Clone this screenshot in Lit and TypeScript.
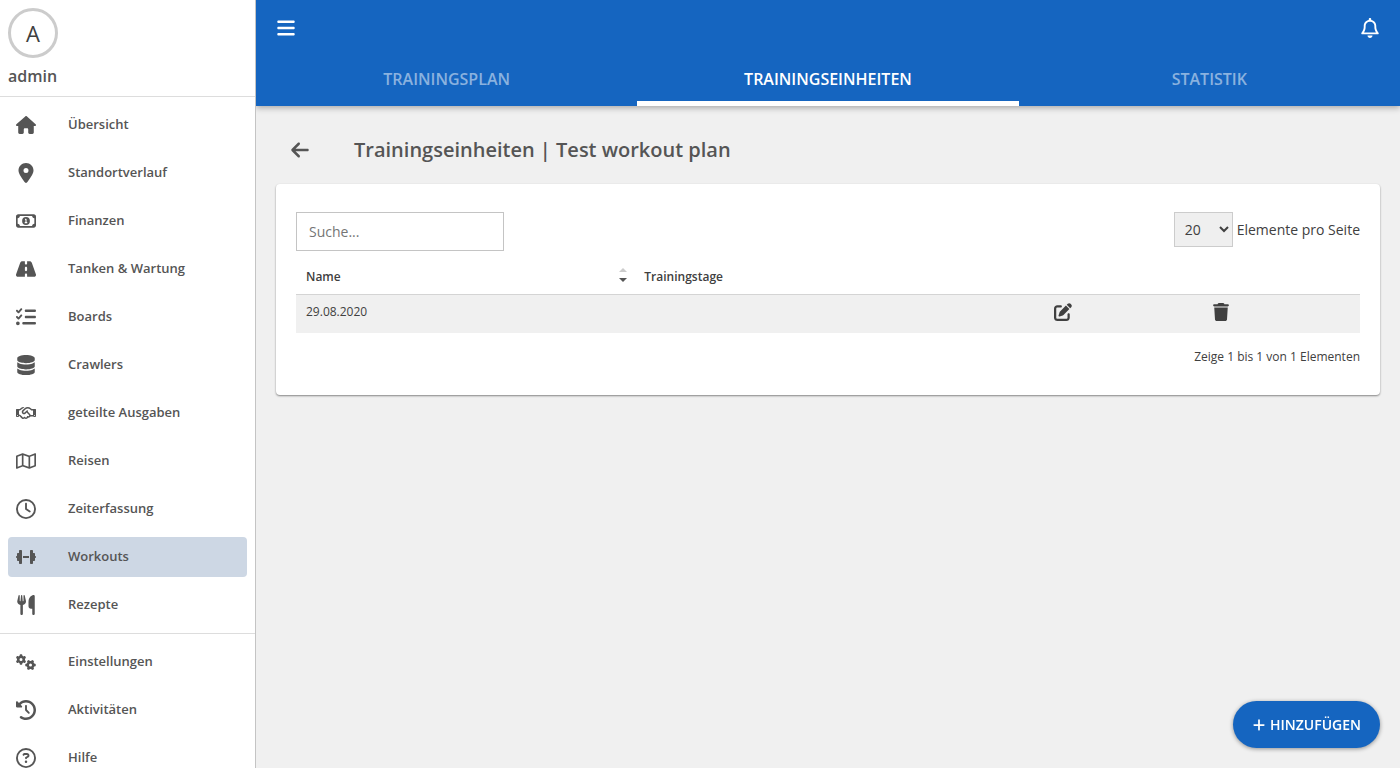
import { LitElement, html, css, svg } from "lit";
import { customElement, property, state } from "lit/decorators.js";
import { classMap } from "lit/directives/class-map.js";

const GEAR =
  "M308.5 135.3c7.1-6.3 9.9-16.2 6.2-25c-2.3-5.3-4.8-10.5-7.6-15.5L304 89.4c-3-5-6.3-9.9-9.8-14.6c-5.7-7.6-15.7-10.1-24.7-7.1l-28.2 9.3c-10.7-8.8-23-16-36.2-20.9L199 27.1c-1.9-9.3-9.1-16.7-18.5-17.8C173.9 8.4 167.2 8 160.4 8h-.7c-6.8 0-13.5 .4-20.1 1.2c-9.4 1.1-16.6 8.6-18.5 17.8L115 56.1c-13.3 5-25.5 12.1-36.2 20.9L50.5 67.8c-9-3-19-.5-24.7 7.1c-3.5 4.7-6.8 9.6-9.9 14.6l-3 5.3c-2.8 5-5.3 10.2-7.6 15.6c-3.7 8.7-.9 18.6 6.2 25l22.2 19.8C32.6 161.9 32 168.9 32 176s.6 14.1 1.7 20.9L11.5 216.7c-7.1 6.3-9.9 16.2-6.2 25c2.3 5.3 4.8 10.5 7.6 15.6l3 5.2c3 5.1 6.3 9.9 9.9 14.6c5.7 7.6 15.7 10.1 24.7 7.1l28.2-9.3c10.7 8.8 23 16 36.2 20.9l6.1 29.1c1.9 9.3 9.1 16.7 18.5 17.8c6.7 .8 13.5 1.2 20.4 1.2s13.7-.4 20.4-1.2c9.4-1.1 16.6-8.6 18.5-17.8l6.1-29.1c13.3-5 25.5-12.1 36.2-20.9l28.2 9.3c9 3 19 .5 24.7-7.1c3.5-4.7 6.8-9.5 9.8-14.6l3.1-5.4c2.8-5 5.3-10.2 7.6-15.5c3.7-8.7 .9-18.6-6.2-25l-22.2-19.8c1.1-6.8 1.7-13.8 1.7-20.9s-.6-14.1-1.7-20.9l22.2-19.8zM112 176a48 48 0 1 1 96 0 48 48 0 1 1 -96 0z";

/* name -> [viewBox width, path]; every icon is 512 units high */
const ICONS: Record<string, [number, string]> = {
  house: [576, "M575.8 255.5c0 18-15 32.1-32 32.1h-32l.7 160.2c0 2.7-.2 5.4-.5 8.1V472c0 22.1-17.9 40-40 40H456c-1.1 0-2.2 0-3.3-.1c-1.4 .1-2.8 .1-4.2 .1H416 392c-22.1 0-40-17.9-40-40V448 384c0-17.7-14.3-32-32-32H256c-17.7 0-32 14.3-32 32v64 24c0 22.1-17.9 40-40 40H160 128.1c-1.5 0-3-.1-4.5-.2c-1.2 .1-2.4 .2-3.6 .2H104c-22.1 0-40-17.9-40-40V360c0-.9 0-1.9 .1-2.8V287.6H32c-18 0-32-14-32-32.1c0-9 3-17 10-24L266.4 8c7-7 15-8 22-8s15 2 21 7L564.8 231.5c8 7 12 15 11 24z"],
  pin: [384, "M215.7 499.2C267 435 384 279.4 384 192C384 86 298 0 192 0S0 86 0 192c0 87.4 117 243 168.3 307.2c12.3 15.3 35.1 15.3 47.4 0zM192 128a64 64 0 1 1 0 128 64 64 0 1 1 0-128z"],
  money: [576, "M112 112c0 35.3-28.7 64-64 64V336c35.3 0 64 28.7 64 64H464c0-35.3 28.7-64 64-64V176c-35.3 0-64-28.7-64-64H112zM0 128C0 92.7 28.7 64 64 64H512c35.3 0 64 28.7 64 64V384c0 35.3-28.7 64-64 64H64c-35.3 0-64-28.7-64-64V128zM176 256a112 112 0 1 1 224 0 112 112 0 1 1 -224 0zm80-48c0 8.8 7.2 16 16 16v64h-8c-8.8 0-16 7.2-16 16s7.2 16 16 16h24 24c8.8 0 16-7.2 16-16s-7.2-16-16-16h-8V208c0-8.8-7.2-16-16-16H272c-8.8 0-16 7.2-16 16z"],
  road: [576, "M256 32H181.2c-27.1 0-51.3 17.1-60.3 42.6L3.1 407.2C1.1 413 0 419.2 0 425.4C0 455.5 24.5 480 54.6 480H256V416c0-17.7 14.3-32 32-32s32 14.3 32 32v64H521.4c30.2 0 54.6-24.5 54.6-54.6c0-6.2-1.1-12.4-3.1-18.2L455.1 74.6C446 49.1 421.9 32 394.8 32H320V96c0 17.7-14.3 32-32 32s-32-14.3-32-32V32zm64 192v64c0 17.7-14.3 32-32 32s-32-14.3-32-32V224c0-17.7 14.3-32 32-32s32 14.3 32 32z"],
  checklist: [512, "M152.1 38.2c9.9 8.9 10.7 24 1.8 33.9l-72 80c-4.4 4.9-10.6 7.8-17.2 7.9s-12.9-2.4-17.6-7L7 113C-2.3 103.6-2.3 88.4 7 79s24.6-9.4 33.9 0l22.1 22.1 55.1-61.2c8.9-9.9 24-10.7 33.9-1.8zm0 160c9.9 8.9 10.7 24 1.8 33.9l-72 80c-4.4 4.9-10.6 7.8-17.2 7.9s-12.9-2.4-17.6-7L7 273c-9.4-9.4-9.4-24.6 0-33.9s24.6-9.4 33.9 0l22.1 22.1 55.1-61.2c8.9-9.9 24-10.7 33.9-1.8zM224 96c0-17.7 14.3-32 32-32H480c17.7 0 32 14.3 32 32s-14.3 32-32 32H256c-17.7 0-32-14.3-32-32zm0 160c0-17.7 14.3-32 32-32H480c17.7 0 32 14.3 32 32s-14.3 32-32 32H256c-17.7 0-32-14.3-32-32zM160 416c0-17.7 14.3-32 32-32H480c17.7 0 32 14.3 32 32s-14.3 32-32 32H192c-17.7 0-32-14.3-32-32zM48 368a48 48 0 1 1 0 96 48 48 0 1 1 0-96z"],
  database: [448, "M448 80v48c0 44.2-100.3 80-224 80S0 172.2 0 128V80C0 35.8 100.3 0 224 0S448 35.8 448 80zM393.2 214.7c20.8-7.4 39.9-16.9 54.8-28.6V288c0 44.2-100.3 80-224 80S0 332.2 0 288V186.1c14.9 11.8 34 21.2 54.8 28.6C99.7 230.7 159.5 240 224 240s124.3-9.3 169.2-25.3zM0 346.1c14.9 11.8 34 21.2 54.8 28.6C99.7 390.7 159.5 400 224 400s124.3-9.3 169.2-25.3c20.8-7.4 39.9-16.9 54.8-28.6V432c0 44.2-100.3 80-224 80S0 476.2 0 432V346.1z"],
  handshake: [640, "M272.2 64.6l-51.1 51.1c-15.3 4.2-29.5 11.9-41.5 22.5L153 161.9C142.8 171 129.5 176 115.8 176H96V304c20.4 .6 39.8 8.9 54.3 23.4l35.6 35.6 7 7 0 0L219.9 397c6.2 6.2 16.4 6.2 22.6 0c1.7-1.7 3-3.7 3.7-5.8c2.8-7.7 9.3-13.5 17.3-15.3s16.4 .6 22.2 6.5L296.5 393c11.6 11.6 30.4 11.6 41.9 0c5.4-5.4 8.3-12.3 8.6-19.4c.4-8.8 5.6-16.6 13.6-20.4s17.3-3 24.4 2.1c9.4 6.7 22.5 5.8 30.9-2.6c9.4-9.4 9.4-24.6 0-33.9L340.1 243l-35.8 33c-27.3 25.2-69.2 25.6-97 .9c-31.7-28.2-32.4-77.4-1.6-106.5l70.1-66.2C303.2 78.4 339.4 64 377.1 64c36.1 0 71 13.3 97.9 37.2L505.1 128H544h40 40c8.8 0 16 7.2 16 16V352c0 17.7-14.3 32-32 32H576c-11.8 0-22.2-6.4-27.7-16H463.4c-3.4 6.7-7.9 13.1-13.5 18.7c-17.1 17.1-40.8 23.8-63 20.1c-3.6 7.3-8.5 14.1-14.6 20.2c-27.3 27.3-70 30-100.4 8.1c-25.1 20.8-62.5 19.5-86-4.1L159 404l-7-7-35.6-35.6c-5.5-5.5-12.7-8.7-20.4-9.3C96 369.7 81.6 384 64 384H32c-17.7 0-32-14.3-32-32V144c0-8.8 7.2-16 16-16H56 96h19.8c2 0 3.9-.7 5.3-2l26.5-23.6C175.5 77.7 211.4 64 248.7 64H259c4.4 0 8.9 .2 13.2 .6zM544 320V176H496c-5.9 0-11.6-2.2-15.9-6.1l-36.9-32.8c-18.2-16.2-41.7-25.1-66.1-25.1c-25.4 0-49.8 9.7-68.3 27.1l-70.1 66.2c-10.3 9.8-10.1 26.3 .5 35.7c9.3 8.3 23.4 8.1 32.5-.3l71.9-66.4c9.7-9 24.9-8.4 33.9 1.4s8.4 24.9-1.4 33.9l-.8 .8 74.4 74.4c10 10 16.5 22.3 19.4 35.1H544zM64 336a16 16 0 1 0 -32 0 16 16 0 1 0 32 0zm528 16a16 16 0 1 0 0-32 16 16 0 1 0 0 32z"],
  map: [576, "M565.6 36.2C572.1 40.7 576 48.1 576 56V392c0 10-6.2 18.9-15.5 22.4l-168 64c-5.2 2-10.9 2.1-16.1 .3L192.5 417.5l-160 61c-7.4 2.8-15.7 1.8-22.2-2.7S0 463.9 0 456V120c0-10 6.1-18.9 15.5-22.4l168-64c5.2-2 10.9-2.1 16.1-.3L383.5 94.5l160-61c7.4-2.8 15.7-1.8 22.2 2.7zM48 136.5V421.2l120-45.7V90.8L48 136.5zM360 422.7V137.3l-144-48V374.7l144 48zm48-1.5l120-45.7V90.8L408 136.5V421.2z"],
  clock: [512, "M464 256A208 208 0 1 1 48 256a208 208 0 1 1 416 0zM0 256a256 256 0 1 0 512 0A256 256 0 1 0 0 256zM232 120V256c0 8 4 15.5 10.7 20l96 64c11 7.4 25.9 4.4 33.3-6.7s4.4-25.9-6.7-33.3L280 243.2V120c0-13.3-10.7-24-24-24s-24 10.7-24 24z"],
  dumbbell: [640, "M96 64c0-17.7 14.3-32 32-32h32c17.7 0 32 14.3 32 32V448c0 17.7-14.3 32-32 32H128c-17.7 0-32-14.3-32-32V384H64c-17.7 0-32-14.3-32-32V288c-17.7 0-32-14.3-32-32s14.3-32 32-32V160c0-17.7 14.3-32 32-32H96V64zm448 0v64h32c17.7 0 32 14.3 32 32v64c17.7 0 32 14.3 32 32s-14.3 32-32 32v64c0 17.7-14.3 32-32 32H544v64c0 17.7-14.3 32-32 32H480c-17.7 0-32-14.3-32-32V64c0-17.7 14.3-32 32-32h32c17.7 0 32 14.3 32 32zM416 224v64H224V224H416z"],
  utensils: [448, "M416 0C400 0 288 32 288 176V288c0 35.3 28.7 64 64 64h32V480c0 17.7 14.3 32 32 32s32-14.3 32-32V352 240 32c0-17.7-14.3-32-32-32zM64 16C64 7.8 57.9 1 49.7 .1S34.2 4.6 32.4 12.5L2.1 148.8C.7 155.1 0 161.5 0 167.9c0 45.9 35.1 83.6 80 87.7V480c0 17.7 14.3 32 32 32s32-14.3 32-32V255.6c44.9-4.1 80-41.8 80-87.7c0-6.4-.7-12.8-2.1-19.1L191.6 12.5c-1.8-8-9.3-13.3-17.4-12.4S160 7.8 160 16V150.2c0 5.4-4.4 9.8-9.8 9.8c-5.1 0-9.3-3.9-9.8-9L127.9 14.6C127.2 6.3 120.3 0 112 0s-15.2 6.3-15.9 14.6L83.7 151c-.5 5.1-4.7 9-9.8 9c-5.4 0-9.8-4.4-9.8-9.8V16z"],
  history: [512, "M75 75L41 41C25.9 25.9 0 36.6 0 57.9V168c0 13.3 10.7 24 24 24H134.1c21.4 0 32.1-25.9 17-41l-30.8-30.8C155 85.5 203 64 256 64c106 0 192 86 192 192s-86 192-192 192c-40.8 0-78.6-12.7-109.7-34.4c-14.5-10.1-34.4-6.6-44.6 7.9s-6.6 34.4 7.9 44.6C151.2 495 201.7 512 256 512c141.4 0 256-114.6 256-256S397.4 0 256 0C185.3 0 121.3 28.7 75 75zm181 53c-13.3 0-24 10.7-24 24V256c0 6.4 2.5 12.5 7 17l72 72c9.4 9.4 24.6 9.4 33.9 0s9.4-24.6 0-33.9l-65-65V152c0-13.3-10.7-24-24-24z"],
  question: [512, "M464 256A208 208 0 1 0 48 256a208 208 0 1 0 416 0zM0 256a256 256 0 1 1 512 0A256 256 0 1 1 0 256zm169.8-90.7c7.9-22.3 29.1-37.3 52.8-37.3h58.3c34.9 0 63.1 28.3 63.1 63.1c0 22.6-12.1 43.5-31.7 54.8L280 264.4c-.2 13-10.9 23.6-24 23.6c-13.3 0-24-10.7-24-24V250.5c0-8.6 4.6-16.5 12.1-20.8l44.3-25.4c4.7-2.7 7.6-7.7 7.6-13.1c0-8.4-6.8-15.1-15.1-15.1H222.6c-3.4 0-6.4 2.1-7.5 5.3l-.4 1.2c-4.4 12.5-18.2 19-30.6 14.6s-19-18.2-14.6-30.6l.4-1.2zM224 352a32 32 0 1 1 64 0 32 32 0 1 1 -64 0z"],
  bell: [448, "M224 0c-17.7 0-32 14.3-32 32V49.9C119.5 61.4 64 124.2 64 200v33.4c0 45.4-15.5 89.5-43.8 124.9L5.3 377c-5.8 7.2-6.9 17.1-2.9 25.4S14.8 416 24 416H424c9.2 0 17.6-5.3 21.6-13.6s2.9-18.2-2.9-25.4l-14.9-18.6C399.5 322.9 384 278.8 384 233.4V200c0-75.8-55.5-138.6-128-150.1V32c0-17.7-14.3-32-32-32zm0 96h8c57.4 0 104 46.6 104 104v33.4c0 47.9 13.9 94.6 39.7 134.6H72.3C98.1 328 112 281.3 112 233.4V200c0-57.4 46.6-104 104-104h8zm64 352H224 160c0 17 6.7 33.3 18.7 45.3s28.3 18.7 45.3 18.7s33.3-6.7 45.3-18.7s18.7-28.3 18.7-45.3z"],
  bars: [448, "M0 96C0 78.3 14.3 64 32 64H416c17.7 0 32 14.3 32 32s-14.3 32-32 32H32C14.3 128 0 113.7 0 96zM0 256c0-17.7 14.3-32 32-32H416c17.7 0 32 14.3 32 32s-14.3 32-32 32H32c-17.7 0-32-14.3-32-32zM448 416c0 17.7-14.3 32-32 32H32c-17.7 0-32-14.3-32-32s14.3-32 32-32H416c17.7 0 32 14.3 32 32z"],
  back: [448, "M9.4 233.4c-12.5 12.5-12.5 32.8 0 45.3l160 160c12.5 12.5 32.8 12.5 45.3 0s12.5-32.8 0-45.3L109.2 288 416 288c17.7 0 32-14.3 32-32s-14.3-32-32-32l-306.7 0L214.6 118.6c12.5-12.5 12.5-32.8 0-45.3s-32.8-12.5-45.3 0l-160 160z"],
  plus: [448, "M256 80c0-17.7-14.3-32-32-32s-32 14.3-32 32V224H48c-17.7 0-32 14.3-32 32s14.3 32 32 32H192V432c0 17.7 14.3 32 32 32s32-14.3 32-32V288H400c17.7 0 32-14.3 32-32s-14.3-32-32-32H256V80z"],
  edit: [512, "M471.6 21.7c-21.9-21.9-57.3-21.9-79.2 0L362.3 51.7l97.9 97.9 30.1-30.1c21.9-21.9 21.9-57.3 0-79.2L471.6 21.7zm-299.2 220c-6.1 6.1-10.8 13.6-13.5 21.9l-29.6 88.8c-2.9 8.6-.6 18.1 5.8 24.6s15.9 8.7 24.6 5.8l88.8-29.6c8.2-2.7 15.7-7.4 21.9-13.5L437.7 172.3 339.7 74.3 172.4 241.7zM96 64C43 64 0 107 0 160V416c0 53 43 96 96 96H352c53 0 96-43 96-96V320c0-17.7-14.3-32-32-32s-32 14.3-32 32v96c0 17.7-14.3 32-32 32H96c-17.7 0-32-14.3-32-32V160c0-17.7 14.3-32 32-32h96c17.7 0 32-14.3 32-32s-14.3-32-32-32H96z"],
  trash: [448, "M135.2 17.7L128 32H32C14.3 32 0 46.3 0 64S14.3 96 32 96H416c17.7 0 32-14.3 32-32s-14.3-32-32-32H320l-7.2-14.3C307.4 6.8 296.3 0 284.2 0H163.8c-12.1 0-23.2 6.8-28.6 17.7zM416 128H32L53.2 467c1.6 25.3 22.6 45 47.9 45H346.9c25.3 0 46.3-19.7 47.9-45L416 128z"],
};

@customElement("app-icon")
class AppIcon extends LitElement {
  @property() name = "house";

  static styles = css`
    :host {
      display: block;
      flex: none;
      width: 20px;
      height: 20px;
    }
    .glyph {
      display: block;
      width: 100%;
      height: 100%;
      fill: currentColor;
    }
  `;

  render() {
    if (this.name === "gears") {
      return html`<svg class="glyph" viewBox="0 0 640 512" aria-hidden="true">
        ${svg`<path d=${GEAR}></path><path transform="translate(304 176) rotate(90 160 176)" d=${GEAR}></path>`}
      </svg>`;
    }
    const [width, path] = ICONS[this.name];
    return html`<svg class="glyph" viewBox="0 0 ${width} 512" aria-hidden="true">
      <path d=${path}></path>
    </svg>`;
  }
}

interface NavEntry {
  icon: string;
  label: string;
}

@customElement("side-nav")
class SideNav extends LitElement {
  @state() active = "Workouts";

  private main: NavEntry[] = [
    { icon: "house", label: "Übersicht" },
    { icon: "pin", label: "Standortverlauf" },
    { icon: "money", label: "Finanzen" },
    { icon: "road", label: "Tanken & Wartung" },
    { icon: "checklist", label: "Boards" },
    { icon: "database", label: "Crawlers" },
    { icon: "handshake", label: "geteilte Ausgaben" },
    { icon: "map", label: "Reisen" },
    { icon: "clock", label: "Zeiterfassung" },
    { icon: "dumbbell", label: "Workouts" },
    { icon: "utensils", label: "Rezepte" },
  ];

  private secondary: NavEntry[] = [
    { icon: "gears", label: "Einstellungen" },
    { icon: "history", label: "Aktivitäten" },
    { icon: "question", label: "Hilfe" },
  ];

  static styles = css`
    :host {
      display: block;
      box-sizing: border-box;
      z-index: 1;
      overflow: hidden;
      background: #fff;
      border-right: 1px solid #c4c4c4;
      color: #555;
    }
    .profile {
      padding: 8px;
    }
    .avatar {
      display: grid;
      place-items: center;
      box-sizing: border-box;
      width: 50px;
      height: 50px;
      border: 3px solid #ccc;
      border-radius: 50%;
      color: #404040;
      font-size: 22px;
      line-height: 30px;
    }
    .user {
      margin-top: 6px;
      font-size: 16px;
      font-weight: 600;
      line-height: 24px;
    }
    .group {
      display: flex;
      flex-direction: column;
      gap: 8px;
      margin: 0;
      padding: 8px;
      border-top: 1px solid #ddd;
      list-style: none;
    }
    .link {
      display: flex;
      align-items: center;
      gap: 32px;
      height: 40px;
      padding: 0 8px;
      border-radius: 4px;
      color: inherit;
      font-size: 13px;
      font-weight: 600;
      line-height: 20px;
      text-decoration: none;
    }
    .label {
      padding-bottom: 2px;
    }
    .active {
      background: #cdd7e4;
    }
  `;

  private group(entries: NavEntry[]) {
    return html`<ul class="group">
      ${entries.map(
        (e) => html`<li>
          <a
            href="#"
            class=${classMap({ link: true, active: e.label === this.active })}
            @click=${(ev: Event) => {
              ev.preventDefault();
              this.active = e.label;
            }}
            ><app-icon name=${e.icon}></app-icon><span class="label">${e.label}</span></a
          >
        </li>`
      )}
    </ul>`;
  }

  render() {
    return html`
      <div class="profile">
        <div class="avatar">A</div>
        <div class="user">admin</div>
      </div>
      <nav>${this.group(this.main)} ${this.group(this.secondary)}</nav>
    `;
  }
}

@customElement("app-root")
class AppRoot extends LitElement {
  @state() tab = "Trainingseinheiten";

  static styles = css`
    :host {
      display: grid;
      grid-template-columns: 256px minmax(0, 1fr);
      height: 100vh;
      overflow: hidden;
      background: #f0f0f0;
      color: #404040;
      font-family: "Open Sans", "Noto Sans", sans-serif;
      font-size: 14px;
    }
    button,
    input,
    select {
      font: inherit;
      color: inherit;
    }
    .icon-button {
      display: flex;
      padding: 0;
      border: 0;
      background: none;
      cursor: pointer;
    }
    .main {
      min-width: 0;
    }
    .header {
      background: #1565c0;
      color: #fff;
      box-shadow: 0 2px 6px rgba(0, 0, 0, 0.3);
    }
    .toolbar {
      display: flex;
      align-items: center;
      justify-content: space-between;
      height: 56px;
      padding: 0 20px;
    }
    .tabs {
      display: grid;
      grid-template-columns: repeat(3, 1fr);
      height: 50px;
    }
    .tab {
      padding: 0;
      border: 0;
      border-bottom: 5px solid transparent;
      background: none;
      color: rgba(255, 255, 255, 0.5);
      font-size: 16px;
      font-weight: 600;
      line-height: 24px;
      text-transform: uppercase;
      cursor: pointer;
    }
    .selected {
      border-bottom-color: #fff;
      color: #fff;
    }
    .content {
      padding: 28px 20px;
    }
    .heading {
      display: flex;
      align-items: center;
      gap: 44px;
      padding: 0 14px;
      color: #555;
    }
    .title {
      margin: 0;
      font-size: 20px;
      font-weight: 600;
      line-height: 32px;
    }
    .card {
      margin-top: 18px;
      padding: 28px 20px;
      border-radius: 4px;
      background: #fff;
      box-shadow: 0 1px 2px rgba(0, 0, 0, 0.45);
    }
    .controls {
      display: flex;
      align-items: flex-start;
      justify-content: space-between;
    }
    .search {
      box-sizing: border-box;
      width: 208px;
      height: 39px;
      padding: 0 12px;
      border: 1px solid #c4c4c4;
      border-radius: 0;
      background: #fff;
    }
    .search::placeholder {
      color: #757575;
    }
    .page-size {
      display: flex;
      align-items: center;
      gap: 4px;
    }
    .select {
      box-sizing: border-box;
      width: 59px;
      height: 35px;
      padding: 0 0 0 6px;
      border: 1px solid #ccc;
      border-radius: 0;
      background: #efefef;
    }
    .table {
      width: 100%;
      margin-top: 8px;
      border-collapse: collapse;
      table-layout: fixed;
      font-size: 12px;
      line-height: 18px;
      text-align: left;
    }
    .col-name {
      width: 31.8%;
    }
    .col-days {
      width: 38.5%;
    }
    .table th {
      height: 35px;
      padding: 0 7px 0 10px;
      border-bottom: 1px solid #d4d4d4;
      font-weight: 600;
    }
    .table td {
      box-sizing: border-box;
      height: 38px;
      padding: 8px 10px;
      background: #f0f0f0;
      vertical-align: top;
    }
    .sortable {
      display: flex;
      align-items: flex-start;
      justify-content: space-between;
    }
    .sorter {
      width: 8px;
      height: 16px;
    }
    .action {
      width: 18px;
      height: 18px;
    }
    .summary {
      margin: 14px 0 0;
      font-size: 12px;
      line-height: 20px;
      text-align: right;
    }
    .add {
      position: fixed;
      right: 20px;
      bottom: 20px;
      display: flex;
      align-items: center;
      gap: 4px;
      height: 47px;
      padding: 0 19px;
      border: 0;
      border-radius: 24px;
      background: #1565c0;
      color: #fff;
      font-weight: 600;
      box-shadow: 0 1px 4px rgba(0, 0, 0, 0.4);
      text-transform: uppercase;
      cursor: pointer;
    }
    .add-icon {
      width: 14px;
      height: 14px;
    }
  `;

  render() {
    return html`
      <side-nav></side-nav>
      <div class="main">
        <header class="header">
          <div class="toolbar">
            <button class="icon-button" aria-label="Menü"><app-icon name="bars"></app-icon></button>
            <button class="icon-button" aria-label="Benachrichtigungen"><app-icon name="bell"></app-icon></button>
          </div>
          <div class="tabs" role="tablist">
            ${["Trainingsplan", "Trainingseinheiten", "Statistik"].map(
              (t) => html`<button
                role="tab"
                aria-selected=${t === this.tab}
                class=${classMap({ tab: true, selected: t === this.tab })}
                @click=${() => (this.tab = t)}
              >
                ${t}
              </button>`
            )}
          </div>
        </header>
        <main class="content">
          <div class="heading">
            <button class="icon-button" aria-label="Zurück"><app-icon name="back"></app-icon></button>
            <h1 class="title">Trainingseinheiten | Test workout plan</h1>
          </div>
          <section class="card">
            <div class="controls">
              <input class="search" type="search" placeholder="Suche..." aria-label="Suche" />
              <label class="page-size">
                <select class="select">
                  <option>10</option>
                  <option selected>20</option>
                  <option>50</option>
                </select>
                <span>Elemente pro Seite</span>
              </label>
            </div>
            <table class="table">
              <colgroup>
                <col class="col-name" />
                <col class="col-days" />
                <col />
                <col />
              </colgroup>
              <thead>
                <tr>
                  <th>
                    <div class="sortable">
                      Name
                      <svg class="sorter" viewBox="0 0 8 16" aria-hidden="true">
                        <path d="M0 4L4 0L8 4Z" fill="#ccc"></path>
                        <path d="M0 10L4 14L8 10Z" fill="#555"></path>
                      </svg>
                    </div>
                  </th>
                  <th>Trainingstage</th>
                  <th></th>
                  <th></th>
                </tr>
              </thead>
              <tbody>
                <tr>
                  <td>29.08.2020</td>
                  <td></td>
                  <td>
                    <button class="icon-button" aria-label="Bearbeiten"><app-icon class="action" name="edit"></app-icon></button>
                  </td>
                  <td>
                    <button class="icon-button" aria-label="Löschen"><app-icon class="action" name="trash"></app-icon></button>
                  </td>
                </tr>
              </tbody>
            </table>
            <p class="summary">Zeige 1 bis 1 von 1 Elementen</p>
          </section>
        </main>
      </div>
      <button class="add"><app-icon class="add-icon" name="plus"></app-icon>Hinzufügen</button>
    `;
  }
}
